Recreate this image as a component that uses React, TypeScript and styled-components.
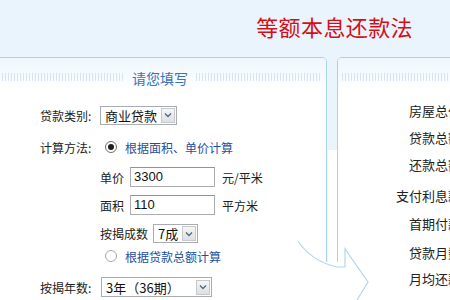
import React from "react";
import styled, { createGlobalStyle } from "styled-components";

const GlobalStyle = createGlobalStyle`
  html, body { margin: 0; padding: 0; }
  body {
    background: #eaf4fc;
    overflow: hidden;
    font-family: "Noto Sans CJK SC", "Liberation Sans", sans-serif;
  }
`;

const Page = styled.div`
  position: relative;
  width: 450px;
  height: 300px;
  overflow: hidden;
  background: #eaf4fc;
`;

const Header = styled.div`
  height: 57px;
  display: flex;
  justify-content: flex-end;
  align-items: flex-start;
  padding-right: 37px;
  box-sizing: border-box;
  padding-top: 11px;
`;

const Title = styled.h1`
  margin: 0;
  font-size: 22px;
  font-weight: 400;
  letter-spacing: 0.4px;
  line-height: 30px;
  color: #d3101a;
`;

const Panels = styled.div`
  display: flex;
  gap: 10px;
  margin-left: -8px;
`;

const Panel = styled.section<{ $w: number }>`
  flex: 0 0 ${(p) => p.$w}px;
  height: 280px;
  box-sizing: border-box;
  border: 1px solid #a9d3e6;
  border-radius: 5px;
  background: #fff;
  overflow: hidden;
`;

const PanelHead = styled.div<{ $pl: number }>`
  height: 32px;
  box-sizing: border-box;
  padding: 14px 6px 0 ${(p) => p.$pl}px;
  background: linear-gradient(#eef7fd, #f7fbfe 60%, #ffffff);
  display: flex;
  align-items: flex-start;
  gap: 8px;
`;

const Stripe = styled.div<{ $w?: number }>`
  ${(p) => (p.$w ? `flex: 0 0 ${p.$w}px;` : "flex: 1;")}
  height: 8px;
  margin-top: 1px;
  background: repeating-linear-gradient(
    90deg,
    #d9e5ee 0,
    #d9e5ee 1px,
    transparent 1px,
    transparent 3px
  );
`;

const HeadTitle = styled.span`
  font-size: 14px;
  line-height: 12px;
  color: #3b72bb;
`;

const FormBody = styled.div`
  padding-left: 47px;
  display: flex;
  flex-direction: column;
`;

const Row = styled.div<{ $mt: number; $indent?: number; $h?: number }>`
  display: flex;
  align-items: center;
  height: ${(p) => p.$h ?? 20}px;
  margin-top: ${(p) => p.$mt}px;
  padding-left: ${(p) => p.$indent ?? 0}px;
  font-size: 12px;
  color: #222;
`;

const Label = styled.span<{ $w?: number }>`
  display: inline-block;
  width: ${(p) => p.$w ?? 60}px;
  flex: 0 0 auto;
  white-space: nowrap;
`;

const SelectBox = styled.div<{ $w: number; $h?: number }>`
  width: ${(p) => p.$w}px;
  height: ${(p) => p.$h ?? 19}px;
  box-sizing: border-box;
  border: 1px solid #a7adb3;
  background: #fff;
  display: flex;
  align-items: center;
  justify-content: space-between;
  padding: 0 1px 0 4px;
  font-size: 13px;
  color: #111;
  white-space: nowrap;
`;

const SelectBtn = styled.span`
  width: 14px;
  height: 15px;
  box-sizing: border-box;
  border: 1px solid #c6c9cc;
  background: linear-gradient(#f6f6f6, #dedfe0);
  display: flex;
  align-items: center;
  justify-content: center;
`;

const Input = styled.div`
  width: 85px;
  height: 20px;
  box-sizing: border-box;
  border: 1px solid #abadb3;
  border-top-color: #8f949a;
  background: #fff;
  padding-left: 3px;
  font-size: 13px;
  line-height: 18px;
  color: #111;
  font-family: "Liberation Sans", "Noto Sans CJK SC", sans-serif;
`;

const Unit = styled.span`
  margin-left: 7px;
  font-size: 12px;
  color: #222;
`;

const Radio = styled.span<{ $on?: boolean }>`
  width: 12px;
  height: 12px;
  box-sizing: border-box;
  border-radius: 50%;
  border: 1px solid ${(p) => (p.$on ? "#6f6f6f" : "#a3a8ad")};
  background: #fff;
  display: inline-flex;
  align-items: center;
  justify-content: center;
  margin-right: 8px;
  &::after {
    content: "";
    width: 6px;
    height: 6px;
    border-radius: 50%;
    background: ${(p) => (p.$on ? "#1e1e1e" : "transparent")};
  }
`;

const Link = styled.span`
  font-size: 12px;
  color: #1d4f9e;
  white-space: nowrap;
`;

const ResultBody = styled.div`
  padding-left: 56px;
  display: flex;
  flex-direction: column;
`;

const ResultRow = styled.div<{ $mt: number }>`
  height: 20px;
  margin-top: ${(p) => p.$mt}px;
  display: flex;
  align-items: center;
  font-size: 13px;
  color: #222;
  white-space: nowrap;
`;

const ResultLabel = styled.span`
  width: 80px;
  text-align: right;
  flex: 0 0 auto;
`;

const Overlay = styled.svg`
  position: absolute;
  left: 0;
  top: 0;
  pointer-events: none;
`;

const Chevron = () => (
  <svg width="8" height="6" viewBox="0 0 8 6">
    <path d="M1 1.5 L4 4.5 L7 1.5" fill="none" stroke="#4d6b8a" strokeWidth="1.4" />
  </svg>
);

const Select = ({ w, h, value }: { w: number; h?: number; value: string }) => (
  <SelectBox $w={w} $h={h}>
    <span>{value}</span>
    <SelectBtn>
      <Chevron />
    </SelectBtn>
  </SelectBox>
);

const results: [string, number][] = [
  ["房屋总价：", 10],
  ["贷款总额：", 7],
  ["还款总额：", 7],
  ["支付利息款：", 11],
  ["首期付款：", 8],
  ["贷款月数：", 9],
  ["月均还款：", 6],
];

export default function App() {
  return (
    <>
      <GlobalStyle />
      <Page>
        <Header>
          <Title>等额本息还款法</Title>
        </Header>
        <Panels>
          <Panel $w={335}>
            <PanelHead $pl={6}>
              <Stripe />
              <HeadTitle>请您填写</HeadTitle>
              <Stripe $w={124} />
            </PanelHead>
            <FormBody>
              <Row $mt={15}>
                <Label>贷款类别:</Label>
                <Select w={77} value="商业贷款" />
              </Row>
              <Row $mt={12}>
                <Label $w={65}>计算方法:</Label>
                <Radio $on />
                <Link>根据面积、单价计算</Link>
              </Row>
              <Row $mt={10} $indent={60}>
                <Label $w={30}>单价</Label>
                <Input>3300</Input>
                <Unit>元/平米</Unit>
              </Row>
              <Row $mt={8} $indent={60}>
                <Label $w={30}>面积</Label>
                <Input>110</Input>
                <Unit>平方米</Unit>
              </Row>
              <Row $mt={9} $indent={60} $h={19}>
                <Label $w={53}>按揭成数</Label>
                <Select w={45} value="7成" />
              </Row>
              <Row $mt={5} $indent={65} $h={16}>
                <Radio />
                <Link>根据贷款总额计算</Link>
              </Row>
              <Row $mt={13}>
                <Label $w={61}>按揭年数:</Label>
                <Select w={111} h={20} value="3年（36期）" />
              </Row>
            </FormBody>
          </Panel>
          <Panel $w={200}>
            <PanelHead $pl={4}>
              <Stripe />
            </PanelHead>
            <ResultBody>
              {results.map(([t, mt]) => (
                <ResultRow key={t} $mt={mt}>
                  <ResultLabel>{t}</ResultLabel>
                </ResultRow>
              ))}
            </ResultBody>
          </Panel>
        </Panels>
        <Overlay width={450} height={300} viewBox="0 0 450 300">
          <rect x="328" y="150" width="9" height="116" fill="#ffffff" />
          <rect x="318" y="262" width="30" height="38" fill="#ffffff" />
          <path
            d="M298 241 Q311 261 337 267"
            fill="none"
            stroke="#b4d8ea"
            strokeWidth="1.2"
          />
          <path
            d="M337 267 L345 267 L345 249 L368 282 L357 300"
            fill="#ffffff"
            stroke="#b4d8ea"
            strokeWidth="1.2"
          />
        </Overlay>
      </Page>
    </>
  );
}
